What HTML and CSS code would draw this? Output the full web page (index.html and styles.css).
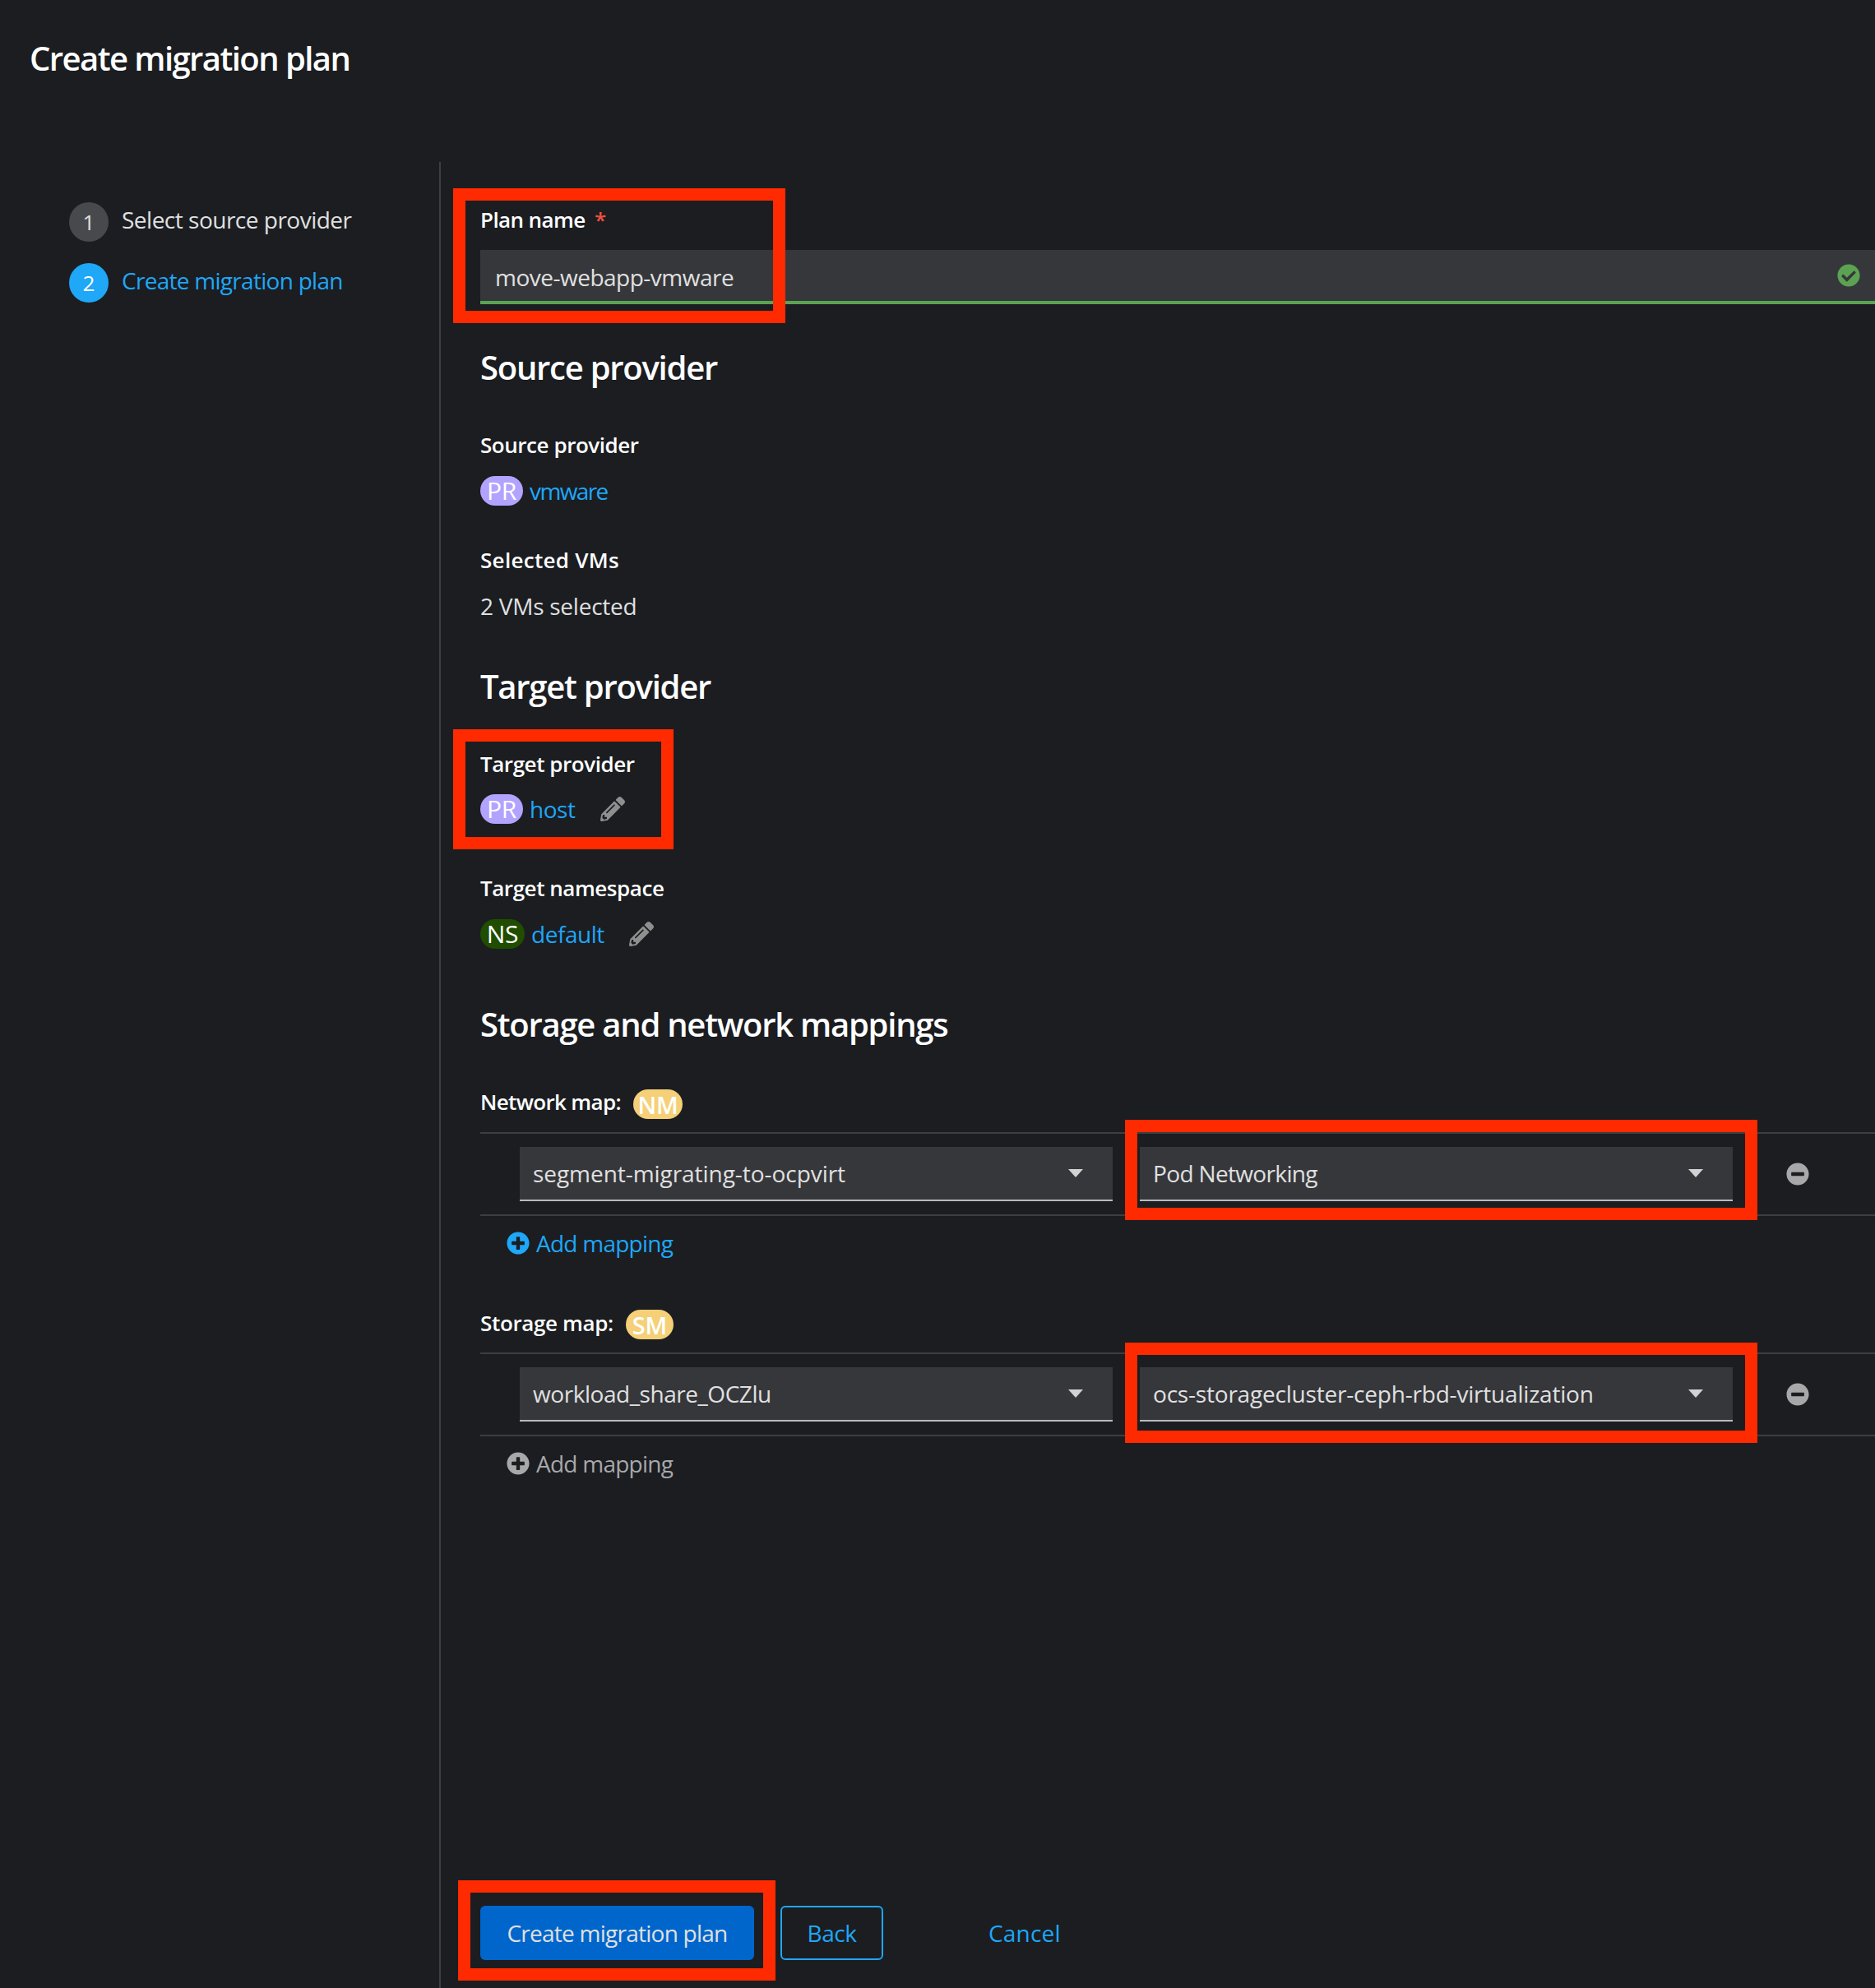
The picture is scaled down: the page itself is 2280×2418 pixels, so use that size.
FILE: index.html
```html
<!DOCTYPE html>
<html lang="en">
<head>
<meta charset="utf-8">
<title>Create migration plan</title>
<link rel="stylesheet" href="styles.css">
</head>
<body>
<div class="page">
  <header class="page-head"><h1 class="page-title">Create migration plan</h1></header>
  <div class="wizard">
    <nav class="steps">
      <div class="step"><span class="step-num">1</span><span class="step-text">Select source provider</span></div>
      <div class="step step-current"><span class="step-num">2</span><span class="step-text">Create migration plan</span></div>
    </nav>
    <main class="content">
      <div class="label plan-label"><span class="t-plan">Plan name</span> <span class="req">*</span></div>
      <div class="input">
        <span class="input-text">move-webapp-vmware</span>
        <svg class="check" viewBox="0 0 512 512"><path d="M504 256c0 136.967-111.033 248-248 248S8 392.967 8 256 119.033 8 256 8s248 111.033 248 248zM227.314 387.314l184-184c6.248-6.248 6.248-16.379 0-22.627l-22.627-22.627c-6.248-6.249-16.379-6.249-22.628 0L216 308.118l-70.059-70.059c-6.248-6.248-16.379-6.248-22.628 0l-22.627 22.627c-6.248 6.248-6.248 16.379 0 22.627l104 104c6.249 6.249 16.379 6.249 22.628.001z"/></svg>
      </div>

      <h2 class="section s-source">Source provider</h2>
      <div class="label l-source">Source provider</div>
      <div class="value"><span class="badge badge-pr">PR</span><a class="link t-vmware">vmware</a></div>
      <div class="label l-vms">Selected VMs</div>
      <div class="value t-vms">2 VMs selected</div>

      <h2 class="section s-target">Target provider</h2>
      <div class="label l-source">Target provider</div>
      <div class="value v-tight"><span class="badge badge-pr">PR</span><a class="link">host</a>
        <svg class="pencil" viewBox="0 0 512 512"><path d="M497.9 142.1l-46.1 46.1c-4.7 4.7-12.3 4.7-17 0l-111-111c-4.7-4.7-4.7-12.3 0-17l46.1-46.1c18.7-18.7 49.1-18.7 67.9 0l60.1 60.1c18.8 18.7 18.8 49.1 0 67.9zM284.2 99.8L21.6 362.4.4 483.9c-2.9 16.4 11.4 30.6 27.8 27.8l121.5-21.3 262.6-262.6c4.7-4.7 4.7-12.3 0-17l-111-111c-4.8-4.7-12.4-4.7-17.1 0zM124.1 339.9c-5.5-5.5-5.5-14.3 0-19.8l154-154c5.5-5.5 14.3-5.5 19.8 0s5.5 14.3 0 19.8l-154 154c-5.5 5.5-14.3 5.5-19.8 0zM88 424h48v36.3l-64.5 11.3-31.1-31.1L51.7 376H88v48z"/></svg>
      </div>
      <div class="label l-ns">Target namespace</div>
      <div class="value"><span class="badge badge-ns">NS</span><a class="link">default</a>
        <svg class="pencil" viewBox="0 0 512 512"><path d="M497.9 142.1l-46.1 46.1c-4.7 4.7-12.3 4.7-17 0l-111-111c-4.7-4.7-4.7-12.3 0-17l46.1-46.1c18.7-18.7 49.1-18.7 67.9 0l60.1 60.1c18.8 18.7 18.8 49.1 0 67.9zM284.2 99.8L21.6 362.4.4 483.9c-2.9 16.4 11.4 30.6 27.8 27.8l121.5-21.3 262.6-262.6c4.7-4.7 4.7-12.3 0-17l-111-111c-4.8-4.7-12.4-4.7-17.1 0zM124.1 339.9c-5.5-5.5-5.5-14.3 0-19.8l154-154c5.5-5.5 14.3-5.5 19.8 0s5.5 14.3 0 19.8l-154 154c-5.5 5.5-14.3 5.5-19.8 0zM88 424h48v36.3l-64.5 11.3-31.1-31.1L51.7 376H88v48z"/></svg>
      </div>

      <h2 class="section s-maps">Storage and network mappings</h2>

      <div class="map-head m-net"><span class="label map-label">Network map:</span><span class="badge badge-map">NM</span></div>
      <div class="map-row">
        <div class="select"><span class="t-segment">segment-migrating-to-ocpvirt</span><i class="caret"></i></div>
        <div class="select"><span class="t-pod">Pod Networking</span><i class="caret"></i></div>
        <svg class="minus" viewBox="0 0 512 512"><path d="M256 8C119 8 8 119 8 256s111 248 248 248 248-111 248-248S393 8 256 8zM124 296c-6.6 0-12-5.4-12-12v-56c0-6.6 5.4-12 12-12h264c6.6 0 12 5.4 12 12v56c0 6.6-5.4 12-12 12H124z"/></svg>
      </div>
      <div class="add add-active">
        <svg class="plus" viewBox="0 0 512 512"><path d="M256 8C119 8 8 119 8 256s111 248 248 248 248-111 248-248S393 8 256 8zm144 276c0 6.6-5.4 12-12 12h-92v92c0 6.6-5.4 12-12 12h-56c-6.6 0-12-5.4-12-12v-92h-92c-6.6 0-12-5.4-12-12v-56c0-6.6 5.4-12 12-12h92v-92c0-6.6 5.4-12 12-12h56c6.6 0 12 5.4 12 12v92h92c6.6 0 12 5.4 12 12v56z"/></svg>
        <span>Add mapping</span>
      </div>

      <div class="map-head m-sto"><span class="label map-label">Storage map:</span><span class="badge badge-map badge-sm">SM</span></div>
      <div class="map-row">
        <div class="select"><span>workload_share_OCZlu</span><i class="caret"></i></div>
        <div class="select"><span class="t-ocs">ocs-storagecluster-ceph-rbd-virtualization</span><i class="caret"></i></div>
        <svg class="minus" viewBox="0 0 512 512"><path d="M256 8C119 8 8 119 8 256s111 248 248 248 248-111 248-248S393 8 256 8zM124 296c-6.6 0-12-5.4-12-12v-56c0-6.6 5.4-12 12-12h264c6.6 0 12 5.4 12 12v56c0 6.6-5.4 12-12 12H124z"/></svg>
      </div>
      <div class="add">
        <svg class="plus" viewBox="0 0 512 512"><path d="M256 8C119 8 8 119 8 256s111 248 248 248 248-111 248-248S393 8 256 8zm144 276c0 6.6-5.4 12-12 12h-92v92c0 6.6-5.4 12-12 12h-56c-6.6 0-12-5.4-12-12v-92h-92c-6.6 0-12-5.4-12-12v-56c0-6.6 5.4-12 12-12h92v-92c0-6.6 5.4-12 12-12h56c6.6 0 12 5.4 12 12v92h92c6.6 0 12 5.4 12 12v56z"/></svg>
        <span>Add mapping</span>
      </div>

      <footer class="actions">
        <button class="btn btn-primary">Create migration plan</button>
        <button class="btn btn-secondary">Back</button>
        <button class="btn btn-link">Cancel</button>
      </footer>
    </main>
  </div>
  <div class="mark mark-plan"></div>
  <div class="mark mark-target"></div>
  <div class="mark mark-net"></div>
  <div class="mark mark-sto"></div>
  <div class="mark mark-create"></div>
</div>
</body>
</html>
```
FILE: styles.css
```css
* { box-sizing: border-box; }
html, body { margin: 0; padding: 0; background: #1b1d21; }
body { font-family: "Open Sans", "Noto Sans", sans-serif; font-size: 28px; color: #e0e0e0; }
.page { position: relative; width: 2280px; height: 2418px; overflow: hidden; display: flex; flex-direction: column; }
.page-head { height: 197px; padding: 47px 0 0 36px; }
.page-title { margin: 0; font-size: 40px; line-height: 48px; font-weight: 600; color: #fff; letter-spacing: -1.55px; }
.wizard { flex: 1; display: flex; min-height: 0; }
.steps { width: 536px; padding: 49px 0 0 84px; border-right: 2px solid #3c3f42; flex: none; display: flex; flex-direction: column; gap: 26px; }
.step { display: flex; align-items: center; gap: 16px; height: 48px; }
.step-num { width: 48px; height: 48px; border-radius: 50%; background: #47494d; color: #e0e0e0; display: flex; align-items: center; justify-content: center; font-size: 26px; }
.step-text { position: relative; top: -3px; letter-spacing: -0.5px; }
.step-current .step-num { background: #1fa7f8; color: #fff; }
.step-current .step-text { color: #1fa7f8; letter-spacing: -0.72px; }
.content { flex: 1; min-width: 0; padding-left: 48px; display: flex; flex-direction: column; }
.label { position: relative; top: -1px; font-weight: 600; font-size: 26px; line-height: 36px; color: #fff; letter-spacing: -0.45px; }
.plan-label { margin-top: 53px; }
.t-plan { letter-spacing: -0.6px; }
.req { color: #f0503c; margin-left: 5px; }
.input { margin-top: 18px; height: 66px; background: #36373b; border-bottom: 4px solid #5ba352; display: flex; align-items: center; justify-content: space-between; padding: 0 18px 0 18px; letter-spacing: -0.5px; }
.input-text { position: relative; top: 2px; }
.check { width: 28px; height: 28px; fill: #5ba352; }
.section { position: relative; top: -1px; margin: 0; font-size: 40px; line-height: 52px; font-weight: 600; color: #fff; letter-spacing: -1.25px; }
.s-source { margin-top: 52px; }
.s-target { margin-top: 55px; }
.s-maps { margin-top: 67px; }
.l-source { margin-top: 50px; }
.l-vms { margin-top: 49px; letter-spacing: 0.3px; }
.l-ns { margin-top: 61px; }
.value { margin-top: 19px; height: 36px; display: flex; align-items: center; line-height: 36px; letter-spacing: -0.45px; }
.v-tight { margin-top: 18px; }
.t-vms { letter-spacing: -0.25px; }
.t-vmware { letter-spacing: -1.6px; }
.badge { height: 36px; border-radius: 18px; display: inline-flex; align-items: center; justify-content: center; color: #fff; flex: none; font-size: 30px; letter-spacing: -0.3px; }
.badge-pr { width: 52px; background: #b2a3ff; }
.badge-ns { width: 54px; background: #204d00; }
.badge-map { width: 60px; background: #f5d078; font-weight: 600; font-size: 29px; }
.badge-sm { width: 58px; }
.link { color: #1fa7f8; margin-left: 8px; }
.pencil { width: 30px; height: 30px; fill: #8f8f8f; margin-left: 30px; }
.map-head { display: flex; align-items: center; height: 36px; gap: 15px; }
.map-label { top: -3px; letter-spacing: -0.65px; }
.m-net { margin-top: 52px; }
.m-sto { margin-top: 63px; }
.m-sto .map-label { top: -2px; letter-spacing: -0.35px; }
.map-row { margin-top: 16px; height: 102px; border-top: 2px solid #3c3f42; border-bottom: 2px solid #3c3f42; padding-left: 48px; display: flex; align-items: center; gap: 33px; }
.select { width: 721px; height: 66px; background: #36373b; border-bottom: 2px solid #b8bbbe; display: flex; align-items: center; justify-content: space-between; padding: 0 36px 0 16px; letter-spacing: -0.45px; }
.t-segment { letter-spacing: -0.05px; }
.t-pod { letter-spacing: -0.65px; }
.t-ocs { letter-spacing: -0.2px; }
.caret { width: 0; height: 0; border-left: 9px solid transparent; border-right: 9px solid transparent; border-top: 10px solid #d2d2d2; }
.minus { width: 28px; height: 28px; fill: #a8a8aa; margin-left: 32px; }
.add { margin-top: 15px; height: 36px; padding-left: 32px; display: flex; align-items: center; gap: 8px; color: #a8a8aa; letter-spacing: -0.75px; }
.plus { width: 28px; height: 28px; fill: currentColor; }
.add-active { color: #1fa7f8; }
.actions { margin-top: auto; padding-bottom: 34px; display: flex; align-items: center; }
.btn { height: 66px; border-radius: 6px; font: inherit; letter-spacing: -0.45px; padding: 0; background: none; border: 0; }
.btn-primary { width: 333px; background: #0066cc; color: #e0e0e0; letter-spacing: -0.75px; }
.btn-secondary { width: 125px; margin-left: 32px; border: 2px solid #1fa7f8; color: #1fa7f8; }
.btn-link { width: 86px; margin-left: 128px; color: #1fa7f8; letter-spacing: 0.2px; }
.mark { position: absolute; border: 15px solid #ff2a00; }
.mark-plan { left: 551px; top: 229px; width: 404px; height: 164px; }
.mark-target { left: 551px; top: 887px; width: 268px; height: 146px; }
.mark-net { left: 1368px; top: 1362px; width: 769px; height: 122px; }
.mark-sto { left: 1368px; top: 1633px; width: 769px; height: 122px; }
.mark-create { left: 557px; top: 2287px; width: 386px; height: 122px; }
```
